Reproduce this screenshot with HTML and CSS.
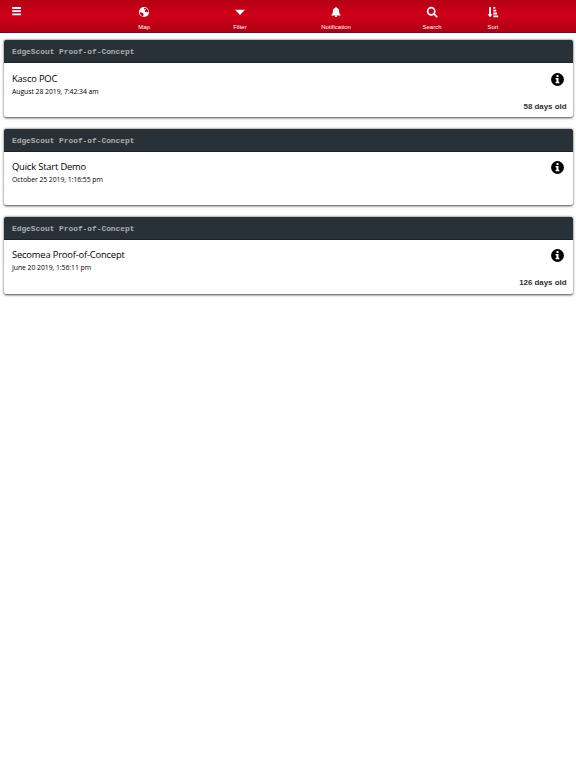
FILE: index.html
```html
<!DOCTYPE html>
<html lang="en">
<head>
    <meta charset="UTF-8">
    <meta name="viewport" content="width=device-width, initial-scale=1.0">
    <title>EdgeScout</title>
    <link rel="stylesheet" href="styles.css">
</head>
<body>
    <div class="navbar">
        <div class="menu">
            <svg width="10" height="10" viewBox="0 0 10 10"><path d="M0.2 0.1h8.800v1.900h-8.800zM0.2 3.200h8.800v1.900h-8.800zM0.2 6.400h8.800v1.900h-8.800z"/></svg>
        </div>
        <div class="item">
            <svg width="12" height="12" viewBox="0 0 12 12">
                <circle cx="6" cy="6" r="5.1"/>
                <path class="cut" d="M6.600 1.700L8.800 2.400L10.300 4.400L10.500 6L9.600 6.500L8.600 5.700L7.500 6.200L6.800 5.400L7.200 4.300L8.300 3.800L7.300 3.200L6.500 3.600L5.900 2.800zM1.700 5.800L3.200 6.500L4.700 7L5.700 8L5.200 9.200L5.400 10.500L3.800 9.900L2.400 8.500z"/>
            </svg>
            <span>Map</span>
        </div>
        <div class="item">
            <svg width="12" height="12" viewBox="0 0 12 12"><path d="M1.100 3.800h9.800L6 8.900z"/></svg>
            <span>Filter</span>
        </div>
        <div class="item">
            <svg width="12" height="12" viewBox="0 0 12 12"><path d="M6 0.900c.5 0 .7.3.7.800 1.700.5 2.300 1.600 2.400 3.300.1 2 .3 2.800 1.700 4.400H1.200C2.600 7.800 2.800 7 2.900 5 3 3.300 3.600 2.200 5.300 1.700c0-.5.2-.8.7-.8zM4.700 9.800h2.600c0 .8-.5 1.300-1.300 1.300s-1.300-.5-1.300-1.300z"/></svg>
            <span>Notification</span>
        </div>
        <div class="item">
            <svg width="12" height="12" viewBox="0 0 12 12"><path class="line" d="M8 8l2.700 2.700"/><circle class="line" cx="5.200" cy="5.300" r="3.600"/></svg>
            <span>Search</span>
        </div>
        <div class="item sort">
            <svg width="12" height="12" viewBox="0 0 12 12"><path d="M2.100 1h1.900v7.300h1.500L3.050 11.300.6 8.300h1.500zM6.300 1h2v1.800h-2zM6.300 3.800h2.900v1.800H6.300zM6.300 6.600h3.800v1.800H6.300zM6.300 9.400h4.900v1.800H6.300z"/></svg>
            <span>Sort</span>
        </div>
    </div>

    <div class="list">
        <div class="card">
            <div class="card-header">EdgeScout Proof-of-Concept</div>
            <div class="card-body">
                <div class="info">
                    <div class="name">Kasco POC</div>
                    <div class="date">August 28 2019, 7:42:34 am</div>
                </div>
                <div class="side">
                    <svg width="13" height="13" viewBox="0 0 13 13"><circle cx="6.500" cy="6.500" r="6.400"/><path class="i" d="M5.500 2h2v1.900h-2zM4.600 5h2.900v3.800h.9v1.400H4.600V8.800h.9V6.400h-.9z"/></svg>
                    <div class="age">58 days old</div>
                </div>
            </div>
        </div>
        <div class="card">
            <div class="card-header">EdgeScout Proof-of-Concept</div>
            <div class="card-body">
                <div class="info">
                    <div class="name">Quick Start Demo</div>
                    <div class="date">October 25 2019, 1:16:55 pm</div>
                </div>
                <div class="side">
                    <svg width="13" height="13" viewBox="0 0 13 13"><circle cx="6.500" cy="6.500" r="6.400"/><path class="i" d="M5.500 2h2v1.900h-2zM4.600 5h2.900v3.800h.9v1.400H4.600V8.800h.9V6.400h-.9z"/></svg>
                </div>
            </div>
        </div>
        <div class="card">
            <div class="card-header">EdgeScout Proof-of-Concept</div>
            <div class="card-body">
                <div class="info">
                    <div class="name">Secomea Proof-of-Concept</div>
                    <div class="date">June 20 2019, 1:56:11 pm</div>
                </div>
                <div class="side">
                    <svg width="13" height="13" viewBox="0 0 13 13"><circle cx="6.500" cy="6.500" r="6.400"/><path class="i" d="M5.500 2h2v1.900h-2zM4.600 5h2.900v3.800h.9v1.400H4.600V8.800h.9V6.400h-.9z"/></svg>
                    <div class="age">126 days old</div>
                </div>
            </div>
        </div>
    </div>
</body>
</html>
```
FILE: styles.css
```css
*{
    box-sizing: border-box;
}
body{
    margin: 0;
    min-height: 100vh;
    background-color: white;
    font-family: "Liberation Sans", Arial, sans-serif;
}
svg{
    display: block;
    flex: none;
}
.navbar{
    display: grid;
    grid-template-columns: repeat(6, 96px);
    height: 33px;
    background: linear-gradient(#b50014, #cf0018 50%, #b00013);
    border-bottom: 1px solid #650d18;
    color: white;
}
.navbar svg{
    fill: white;
}
.navbar .cut{
    fill: #c40016;
}
.navbar .line{
    fill: none;
    stroke: white;
    stroke-width: 1.7;
    stroke-linecap: round;
}
.menu{
    padding: 7px 12px;
}
.item{
    display: flex;
    flex-direction: column;
    align-items: center;
    padding-top: 6px;
    font-size: 6px;
    line-height: 8px;
}
.item span{
    margin-top: 5px;
}
.sort{
    width: 26px;
}
.list{
    display: flex;
    flex-direction: column;
    gap: 11.400px;
    padding: 7.400px 3.500px 4px 4px;
}
.card{
    height: 76.800px;
    border-radius: 2px;
    background-color: white;
    box-shadow: 0 0.500px 2.500px rgba(0, 0, 0, 0.75);
}
.card-header{
    height: 23px;
    padding-left: 8px;
    border-bottom: 1px solid #1c2226;
    border-radius: 2px 2px 0 0;
    background-color: #293138;
    color: #adada8;
    font: bold 7.85px/24px "Liberation Mono", "Courier New", monospace;
}
.card-body{
    display: flex;
    justify-content: space-between;
    height: 53.800px;
    padding: 8.200px 6px 5.600px 8px;
}
.info{
    font-family: "Open Sans", "Noto Sans", sans-serif;
    color: black;
}
.name{
    font-size: 9.400px;
    font-weight: 500;
    letter-spacing: -0.18px;
    line-height: 13px;
}
.date{
    font-size: 6.900px;
    letter-spacing: -0.07px;
    line-height: 13px;
}
.side{
    display: flex;
    flex-direction: column;
    justify-content: space-between;
    align-items: flex-end;
}
.side svg{
    margin: 1px 2.500px 0 0;
}
.side .i{
    fill: white;
}
.age{
    color: #293138;
    font-size: 7.900px;
    font-weight: bold;
    line-height: 11px;
}
```
